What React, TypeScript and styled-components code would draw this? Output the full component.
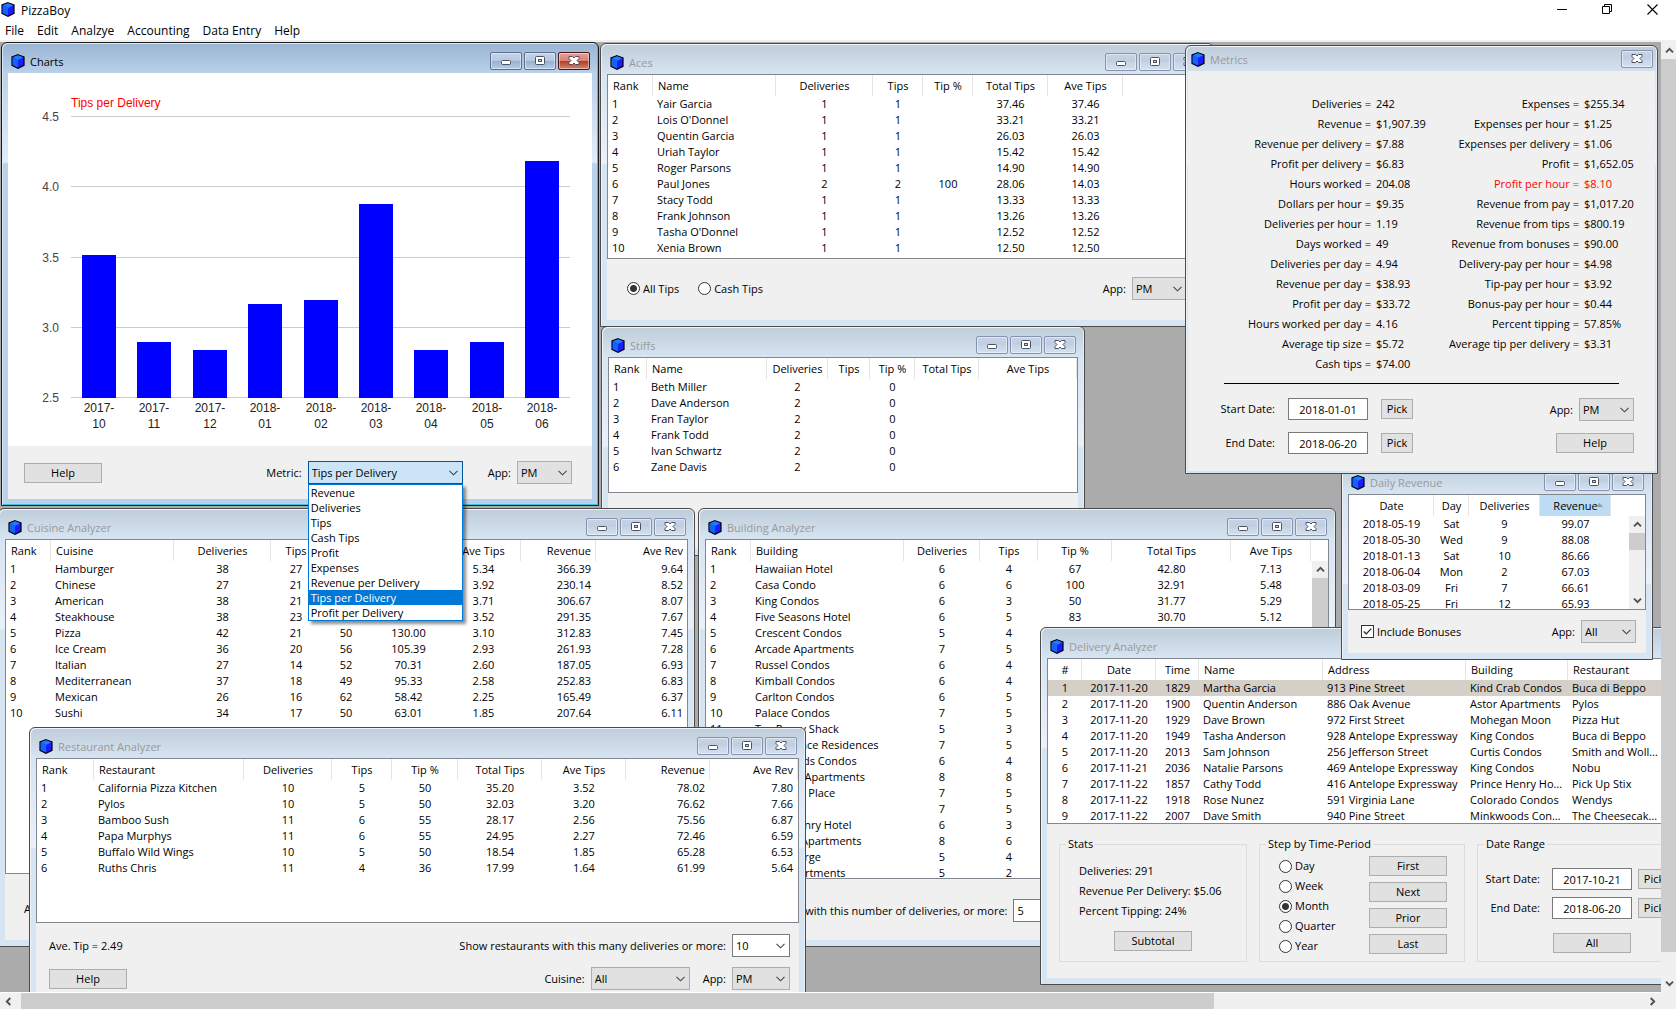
import React from 'react';
import styled, { createGlobalStyle, css } from 'styled-components';

const GlobalStyle = createGlobalStyle`
  * { box-sizing: border-box; }
  body {
    margin: 0;
    background: #fff;
    color: #000;
    font-family: "Open Sans", "Noto Sans", sans-serif;
    font-size: 11px;
    line-height: 16px;
  }
  button, input, select { font: inherit; color: inherit; margin: 0; }
`;

/* ---------- application shell ---------- */

const Shell = styled.div`
  display: flex;
  flex-direction: column;
  height: 100vh;
  overflow: hidden;
`;

const AppTitle = styled.header`
  display: flex;
  align-items: center;
  gap: 6px;
  height: 22px;
  padding: 0 18px 3px 1px;
`;

const AppName = styled.h1`
  flex: 1;
  margin: 0;
  padding-top: 2px;
  font-size: 12px;
  font-weight: 400;
`;

const SystemButtons = styled.div`
  display: flex;
  gap: 34px;
`;

const SystemButton = styled.button`
  display: flex;
  padding: 0;
  border: 0;
  background: none;
`;

const MenuBar = styled.nav`
  display: flex;
  gap: 13px;
  height: 20px;
  padding: 1px 5px;
  border-bottom: 2px solid #f0f0f0;
  font-size: 12px;
`;

const MenuItem = styled.button`
  padding: 0;
  border: 0;
  background: none;
`;

const Workspace = styled.div`
  flex: 1;
  min-height: 0;
  display: grid;
  grid-template-columns: minmax(0, 1fr) 15px;
  grid-template-rows: minmax(0, 1fr) 17px;
  background: #f0f0f0;
`;

const Desktop = styled.main`
  position: relative;
  overflow: hidden;
  background: #ababab;
`;

/* ---------- scroll bars ---------- */

const Track = styled.div<{ $horizontal?: boolean; $below?: number }>`
  display: flex;
  flex-direction: ${p => (p.$horizontal ? 'row' : 'column')};
  gap: ${p => (p.$horizontal ? 4 : 0)}px;
  flex-shrink: 0;
  background: #f0f0f0;
  ${p => (p.$horizontal ? 'border-top: 1px solid #fff;' : 'width: 16px;')}
  margin-top: ${p => p.$below ?? 0}px;
`;

const TrackButton = styled.button`
  display: flex;
  align-items: center;
  justify-content: center;
  flex: 0 0 17px;
  padding: 0;
  border: 0;
  background: none;
`;

const Thumb = styled.div<{ $share: number }>`
  flex: ${p => p.$share} 0 0;
  background: #cdcdcd;
`;

const Rest = styled.div<{ $share: number }>`
  flex: ${p => p.$share} 0 0;
`;

/* ---------- child windows ---------- */

const Frame = styled.section<{
  $x: number; $y: number; $w: number; $h: number; $active?: boolean; $dialog?: boolean;
}>`
  position: absolute;
  left: ${p => p.$x}px;
  top: ${p => p.$y}px;
  width: ${p => p.$w}px;
  height: ${p => p.$h}px;
  display: flex;
  flex-direction: column;
  padding: ${p => (p.$dialog ? '0 2px 2px' : '0 6px 6px')};
  border: 1px solid ${p => (p.$active ? '#1a1a1a' : '#4b4b4b')};
  border-radius: 6px 6px 0 0;
  ${p => p.$active
    ? css`
      background: linear-gradient(#99b4d1, #b9d1ea 30px, #e3ecf8 119px, #b9d1ea 121px);
      box-shadow: inset 1px 1px 0 #dce8f5, inset -1px -1px 0 #35c8e0;
    `
    : css`
      background: linear-gradient(#bfcddb, #d7e4f2 30px, #eaf1f9 119px, #d7e4f2 121px);
      box-shadow: inset 1px 1px 0 #eef4fa, inset -1px 0 0 #e6eef7;
    `}
`;

const TitleBar = styled.header<{ $dialog?: boolean }>`
  display: flex;
  align-items: center;
  flex-shrink: 0;
  gap: 5px;
  height: ${p => (p.$dialog ? 25 : 30)}px;
  padding: ${p => (p.$dialog ? '4px 2px 3px 3px' : '9px 2px 3px 3px')};
`;

const Title = styled.h2<{ $active?: boolean }>`
  flex: 1;
  margin: 0;
  padding-top: 1px;
  font-size: 11px;
  font-weight: 400;
  color: ${p => (p.$active ? '#000' : '#999')};
`;

const FrameButtons = styled.div`
  display: flex;
  gap: 2px;
`;

const FrameButton = styled.button<{ $danger?: boolean; $active?: boolean }>`
  display: flex;
  align-items: center;
  justify-content: center;
  width: 32px;
  height: 18px;
  padding: 0;
  border: 1px solid #8592b0;
  border-radius: 2px;
  box-shadow: inset 0 0 0 1px rgba(255, 255, 255, 0.45);
  background: linear-gradient(#c6d4e4, #bfcee0 50%, #c5d4e6 50%, #d3e0ef);
  ${p => p.$active && css`
    border-color: #5d6f8c;
    background: linear-gradient(#c3d5e9, #b3c9e1 50%, #96b0cf 50%, #b4cde8);
  `}
  ${p => p.$danger && css`
    border-color: #4a1420;
    background: linear-gradient(#e5a194, #d98073 50%, #b43a25 50%, #d6846f);
  `}
`;

const Client = styled.div`
  flex: 1;
  min-height: 0;
  display: flex;
  flex-direction: column;
  background: #f0f0f0;
`;

/* ---------- tables ---------- */

const ListBox = styled.div<{ $h: number }>`
  display: flex;
  flex-shrink: 0;
  height: ${p => p.$h}px;
  overflow: hidden;
  border: 1px solid #828790;
  background: #fff;
`;

const TableArea = styled.div`
  flex: 1;
  min-width: 0;
  overflow: hidden;
`;

const Table = styled.table<{ $w: number }>`
  width: ${p => p.$w}px;
  table-layout: fixed;
  border-collapse: separate;
  border-spacing: 0;
`;

type Align = 'left' | 'center' | 'right';

const HeadCell = styled.th<{ $align: Align; $sorted?: boolean }>`
  position: relative;
  height: 21px;
  padding: 0 4px 0 5px;
  border-right: 1px solid #e5e5e5;
  font-weight: 400;
  text-align: ${p => p.$align};
  white-space: nowrap;
  overflow: hidden;
  background: ${p => (p.$sorted ? '#bcdcf4' : 'transparent')};
`;

const SortMark = styled.svg`
  position: absolute;
  right: 7px;
  top: 8px;
`;

const Cell = styled.td<{ $align: Align }>`
  height: 16px;
  padding: ${p => (p.$align === 'right' ? '0 5px 0 0' : p.$align === 'left' ? '0 3px 0 4px' : '0')};
  text-align: ${p => p.$align};
  white-space: nowrap;
  overflow: hidden;
  text-overflow: ellipsis;
`;

const Row = styled.tr<{ $selected?: boolean }>`
  background: ${p => (p.$selected ? '#d4d0c8' : 'transparent')};
`;

/* ---------- controls ---------- */

const PushButton = styled.button<{ $w?: number }>`
  flex-shrink: 0;
  width: ${p => p.$w ?? 78}px;
  height: 20px;
  padding: 0;
  border: 1px solid #adadad;
  background: #e1e1e1;
  white-space: nowrap;
`;

const SelectWrap = styled.span<{ $w: number }>`
  position: relative;
  display: inline-flex;
  flex-shrink: 0;
  width: ${p => p.$w}px;
  height: 23px;
`;

const NativeSelect = styled.select<{ $tone?: 'edit' | 'open' }>`
  appearance: none;
  width: 100%;
  height: 23px;
  padding: 0 18px 0 3px;
  border: 1px solid ${p => (p.$tone === 'edit' ? '#7a7a7a' : p.$tone === 'open' ? '#005499' : '#adadad')};
  border-radius: 0;
  background: ${p => (p.$tone === 'edit' ? '#fff' : p.$tone === 'open' ? '#cce4f7' : '#e1e1e1')};
`;

const SelectArrow = styled.svg`
  position: absolute;
  right: 4px;
  top: 9px;
  pointer-events: none;
`;

const DropList = styled.ul`
  position: absolute;
  z-index: 1;
  left: 0;
  top: 23px;
  width: 100%;
  margin: 0;
  padding: 0;
  list-style: none;
  border: 1px solid #0078d7;
  background: #fff;
  box-shadow: 3px 3px 3px rgba(0, 0, 0, 0.45);
`;

const DropItem = styled.li<{ $selected?: boolean }>`
  height: 15px;
  padding-left: 2px;
  line-height: 15px;
  color: ${p => (p.$selected ? '#fff' : '#000')};
  background: ${p => (p.$selected ? '#0078d7' : 'transparent')};
`;

const Field = styled.div`
  display: flex;
  align-items: center;
  gap: 6px;
  white-space: nowrap;
`;

const DateInput = styled.input`
  width: 80px;
  height: 22px;
  padding: 0;
  border: 1px solid #7a7a7a;
  background: #fff;
  text-align: center;
`;

const Choice = styled.label`
  display: flex;
  align-items: center;
  gap: 3px;
  height: 20px;
`;

const Radio = styled.input`
  appearance: none;
  width: 13px;
  height: 13px;
  border: 1px solid #333;
  border-radius: 50%;
  background: #fff;
  &:checked { background: radial-gradient(circle, #333 0 3px, #fff 4px); }
`;

const CheckWrap = styled.span`
  position: relative;
  display: flex;
`;

const CheckBox = styled.input`
  appearance: none;
  width: 13px;
  height: 13px;
  border: 1px solid #333;
  background: #fff;
`;

const CheckMark = styled.svg`
  position: absolute;
  left: 2px;
  top: 2px;
  pointer-events: none;
`;

const Bar = styled.div<{ $top: number; $left: number; $right: number }>`
  display: flex;
  align-items: center;
  justify-content: space-between;
  padding: ${p => p.$top}px ${p => p.$right}px 0 ${p => p.$left}px;
`;

const Group = styled.div<{ $gap: number }>`
  display: flex;
  align-items: center;
  gap: ${p => p.$gap}px;
`;

/* ---------- metrics window ---------- */

const MetricColumns = styled.div`
  display: flex;
  padding-top: 23px;
`;

const MetricList = styled.dl<{ $share: number; $label: number }>`
  flex: ${p => p.$share} 1 0;
  margin: 0;
  display: grid;
  grid-template-columns: ${p => p.$label}px 1fr;
  column-gap: 5px;
  grid-auto-rows: 20px;
  line-height: 20px;
  white-space: nowrap;
`;

const MetricName = styled.dt<{ $hot?: boolean }>`
  text-align: right;
  color: ${p => (p.$hot ? '#f00' : 'inherit')};
`;

const MetricValue = styled.dd<{ $hot?: boolean }>`
  margin: 0;
  color: ${p => (p.$hot ? '#f00' : 'inherit')};
`;

const Rule = styled.hr`
  width: auto;
  margin: 9px 36px 14px;
  border: 0;
  border-top: 1px solid #000;
`;

const MetricForm = styled.div`
  display: flex;
  justify-content: space-between;
  padding: 0 21px 0 32px;
`;

const FormStack = styled.div<{ $gap: number }>`
  display: flex;
  flex-direction: column;
  align-items: flex-end;
  gap: ${p => p.$gap}px;
`;

const DateRow = styled.div<{ $label: number; $gap: number }>`
  display: grid;
  grid-template-columns: ${p => p.$label}px 80px 32px;
  align-items: center;
  column-gap: ${p => p.$gap}px;
  white-space: nowrap;
`;

const DateLabel = styled.label<{ $pad: number }>`
  padding-right: ${p => p.$pad}px;
  text-align: right;
`;

/* ---------- delivery window ---------- */

const Groups = styled.div`
  display: flex;
  gap: 12px;
  padding: 12px 12px 0;
`;

const GroupBox = styled.fieldset<{ $w: number }>`
  flex: 0 0 ${p => p.$w}px;
  min-width: 0;
  height: 126px;
  margin: 0;
  padding: 0;
  border: 1px solid #dcdcdc;
`;

const Legend = styled.legend`
  margin-left: 6px;
  padding: 0 2px;
`;

const StatsBody = styled.div`
  display: flex;
  flex-direction: column;
  padding: 9px 19px 0;
`;

const Stat = styled.p`
  margin: 0;
  line-height: 20px;
`;

const StatAction = styled.div`
  display: flex;
  justify-content: center;
  padding-top: 10px;
`;

const StepBody = styled.div`
  display: flex;
  justify-content: space-between;
  padding: 4px 17px 0 19px;
`;

const StepButtons = styled.div`
  display: flex;
  flex-direction: column;
  gap: 6px;
`;

const RangeBody = styled.div`
  display: flex;
  flex-direction: column;
  gap: 7px;
  padding-top: 16px;
`;

const RangeAction = styled.div`
  padding: 7px 0 0 75px;
`;

/* ---------- icons ---------- */

const Cube = () => (
  <svg width="14" height="15" viewBox="0 0 14 15" aria-hidden="true">
    <path d="M7 .7 13 3v8.300L7 14.300 1 11.300V3z" fill="#1c1cff" stroke="#000" strokeWidth="1.200" />
    <path d="M1.600 3.500 7 6v7.600L1.600 11z" fill="#1464f4" />
    <path d="M7 1.300 12.300 3.300 7 6 1.700 3.300z" fill="#1a7cff" />
  </svg>
);

const MinIcon = () => (
  <svg width="12" height="12" viewBox="0 0 12 12" aria-hidden="true">
    <rect x="1.500" y="5.500" width="9" height="4" rx="1" fill="#fff" stroke="#4c5262" />
  </svg>
);

const MaxIcon = () => (
  <svg width="12" height="12" viewBox="0 0 12 12" aria-hidden="true">
    <rect x="1.500" y="1.500" width="9" height="8" rx="1" fill="#fff" stroke="#4c5262" />
    <rect x="4.500" y="4.500" width="3" height="2" fill="#c6d4e4" stroke="#4c5262" />
  </svg>
);

const CloseIcon = () => (
  <svg width="12" height="12" viewBox="0 0 12 12" aria-hidden="true">
    <path d="M1 1.500h3.500l1.500 1.500 1.500-1.500h3.500v2l-2 2 2 2v2h-3.500l-1.500-1.500-1.500 1.500h-3.500v-2l2-2-2-2z" fill="#fff" stroke="#4c5262" />
  </svg>
);

const turns = { up: 0, right: 90, down: 180, left: 270 };

const Arrow = ({ dir }: { dir: keyof typeof turns }) => (
  <svg width="9" height="9" viewBox="0 0 9 9" aria-hidden="true">
    <path d="M1 6.300 4.500 2.800 8 6.300" fill="none" stroke="#505050" strokeWidth="1.900"
      transform={`rotate(${turns[dir]} 4.500 4.500)`} />
  </svg>
);

/* ---------- shared parts ---------- */

type Column = [label: string, width: number, align: Align];

function ScrollBar({ parts, horizontal, below }: {
  parts: [number, number]; horizontal?: boolean; below?: number;
}) {
  return (
    <Track $horizontal={horizontal} $below={below}>
      <TrackButton aria-label={horizontal ? 'Scroll left' : 'Scroll up'}><Arrow dir={horizontal ? 'left' : 'up'} /></TrackButton>
      <Thumb $share={parts[0]} />
      <Rest $share={parts[1]} />
      <TrackButton aria-label={horizontal ? 'Scroll right' : 'Scroll down'}><Arrow dir={horizontal ? 'right' : 'down'} /></TrackButton>
    </Track>
  );
}

function ListView({ columns, rows, height, selected, sorted, scroll }: {
  columns: Column[]; rows: string[][]; height: number;
  selected?: number; sorted?: number; scroll?: [number, number];
}) {
  const width = columns.reduce((sum, c) => sum + c[1], 0);
  return (
    <ListBox $h={height}>
      <TableArea>
        <Table $w={width}>
          <colgroup>{columns.map((c, i) => <col key={i} style={{ width: c[1] }} />)}</colgroup>
          <thead>
            <tr>
              {columns.map((c, i) => (
                <HeadCell key={i} $align={c[2]} $sorted={i === sorted}>
                  {c[0]}
                  {i === sorted && (
                    <SortMark width="7" height="4" viewBox="0 0 7 4"><path d="M0 4 3.500 0 7 4z" fill="#9a9a9a" /></SortMark>
                  )}
                </HeadCell>
              ))}
            </tr>
          </thead>
          <tbody>
            {rows.map((row, r) => (
              <Row key={r} $selected={r === selected}>
                {row.map((cell, i) => <Cell key={i} $align={columns[i][2]}>{cell}</Cell>)}
              </Row>
            ))}
          </tbody>
        </Table>
      </TableArea>
      {scroll && <ScrollBar parts={scroll} below={21} />}
    </ListBox>
  );
}

function Dropdown({ id, label, value, width = 55, tone, children }: {
  id: string; label: string; value: string; width?: number; tone?: 'edit' | 'open'; children?: React.ReactNode;
}) {
  return (
    <Field>
      <label htmlFor={id}>{label}</label>
      <SelectWrap $w={width}>
        <NativeSelect id={id} $tone={tone} defaultValue={value}><option>{value}</option></NativeSelect>
        <SelectArrow width="11" height="6" viewBox="0 0 11 6" aria-hidden="true">
          <path d="M1.500.8 5.500 4.800 9.500.8" fill="none" stroke="#444" strokeWidth="1.100" />
        </SelectArrow>
        {children}
      </SelectWrap>
    </Field>
  );
}

function DateField({ id, label, value, labelWidth, labelPad = 0, gap }: {
  id: string; label: string; value: string; labelWidth: number; labelPad?: number; gap: number;
}) {
  return (
    <DateRow $label={labelWidth} $gap={gap}>
      <DateLabel htmlFor={id} $pad={labelPad}>{label}</DateLabel>
      <DateInput id={id} defaultValue={value} />
      <PushButton $w={32}>Pick</PushButton>
    </DateRow>
  );
}

function Window({ title, x, y, w, h, active, dialog, children }: {
  title: string; x: number; y: number; w: number; h: number;
  active?: boolean; dialog?: boolean; children: React.ReactNode;
}) {
  return (
    <Frame $x={x} $y={y} $w={w} $h={h} $active={active} $dialog={dialog}>
      <TitleBar $dialog={dialog}>
        <Cube />
        <Title $active={active}>{title}</Title>
        <FrameButtons>
          {!dialog && <FrameButton $active={active} aria-label="Minimize"><MinIcon /></FrameButton>}
          {!dialog && <FrameButton $active={active} aria-label="Maximize"><MaxIcon /></FrameButton>}
          <FrameButton $danger={active} aria-label="Close"><CloseIcon /></FrameButton>
        </FrameButtons>
      </TitleBar>
      <Client>{children}</Client>
    </Frame>
  );
}

/* ---------- data ---------- */

const acesColumns: Column[] = [
  ['Rank', 45, 'left'], ['Name', 123, 'left'], ['Deliveries', 97, 'center'], ['Tips', 50, 'center'],
  ['Tip %', 50, 'center'], ['Total Tips', 75, 'center'], ['Ave Tips', 75, 'center'],
];
const aces = [
  ['1', 'Yair Garcia', '1', '1', '', '37.46', '37.46'],
  ['2', "Lois O'Donnel", '1', '1', '', '33.21', '33.21'],
  ['3', 'Quentin Garcia', '1', '1', '', '26.03', '26.03'],
  ['4', 'Uriah Taylor', '1', '1', '', '15.42', '15.42'],
  ['5', 'Roger Parsons', '1', '1', '', '14.90', '14.90'],
  ['6', 'Paul Jones', '2', '2', '100', '28.06', '14.03'],
  ['7', 'Stacy Todd', '1', '1', '', '13.33', '13.33'],
  ['8', 'Frank Johnson', '1', '1', '', '13.26', '13.26'],
  ['9', "Tasha O'Donnel", '1', '1', '', '12.52', '12.52'],
  ['10', 'Xenia Brown', '1', '1', '', '12.50', '12.50'],
];

const stiffsColumns: Column[] = [
  ['Rank', 38, 'left'], ['Name', 120, 'left'], ['Deliveries', 61, 'center'], ['Tips', 42, 'center'],
  ['Tip %', 45, 'center'], ['Total Tips', 64, 'center'], ['Ave Tips', 98, 'center'],
];
const stiffs = ['Beth Miller', 'Dave Anderson', 'Fran Taylor', 'Frank Todd', 'Ivan Schwartz', 'Zane Davis']
  .map((name, i) => [String(i + 1), name, '2', '', '0', '', '']);

const cuisineColumns: Column[] = [
  ['Rank', 45, 'left'], ['Cuisine', 123, 'left'], ['Deliveries', 97, 'center'], ['Tips', 50, 'center'],
  ['Tip %', 50, 'center'], ['Total Tips', 75, 'center'], ['Ave Tips', 75, 'center'], ['Revenue', 75, 'right'], ['Ave Rev', 92, 'right'],
];
const cuisines = [
  ['1', 'Hamburger', '38', '27', '71', '202.92', '5.34', '366.39', '9.64'],
  ['2', 'Chinese', '27', '21', '78', '105.84', '3.92', '230.14', '8.52'],
  ['3', 'American', '38', '21', '55', '140.98', '3.71', '306.67', '8.07'],
  ['4', 'Steakhouse', '38', '23', '61', '133.76', '3.52', '291.35', '7.67'],
  ['5', 'Pizza', '42', '21', '50', '130.00', '3.10', '312.83', '7.45'],
  ['6', 'Ice Cream', '36', '20', '56', '105.39', '2.93', '261.93', '7.28'],
  ['7', 'Italian', '27', '14', '52', '70.31', '2.60', '187.05', '6.93'],
  ['8', 'Mediterranean', '37', '18', '49', '95.33', '2.58', '252.83', '6.83'],
  ['9', 'Mexican', '26', '16', '62', '58.42', '2.25', '165.49', '6.37'],
  ['10', 'Sushi', '34', '17', '50', '63.01', '1.85', '207.64', '6.11'],
];

const buildingColumns: Column[] = [
  ['Rank', 45, 'left'], ['Building', 153, 'left'], ['Deliveries', 76, 'center'], ['Tips', 58, 'center'],
  ['Tip %', 74, 'center'], ['Total Tips', 119, 'center'], ['Ave Tips', 80, 'center'],
];
const buildings = [
  ['1', 'Hawaiian Hotel', '6', '4', '67', '42.80', '7.13'],
  ['2', 'Casa Condo', '6', '6', '100', '32.91', '5.48'],
  ['3', 'King Condos', '6', '3', '50', '31.77', '5.29'],
  ['4', 'Five Seasons Hotel', '6', '5', '83', '30.70', '5.12'],
  ['5', 'Crescent Condos', '5', '4', '', '', ''],
  ['6', 'Arcade Apartments', '7', '5', '', '', ''],
  ['7', 'Russel Condos', '6', '4', '', '', ''],
  ['8', 'Kimball Condos', '6', '4', '', '', ''],
  ['9', 'Carlton Condos', '6', '5', '', '', ''],
  ['10', 'Palace Condos', '7', '5', '', '', ''],
  ['11', 'Tex Posey Shack', '5', '3', '', '', ''],
  ['12', 'Renaissance Residences', '7', '5', '', '', ''],
  ['13', 'Cloverfields Condos', '6', '4', '', '', ''],
  ['14', 'Riverside Apartments', '8', '8', '', '', ''],
  ['15', 'Lexington Place', '7', '5', '', '', ''],
  ['16', 'Plaza', '7', '5', '', '', ''],
  ['17', 'Prince Henry Hotel', '6', '3', '', '', ''],
  ['18', 'Foothills Apartments', '8', '6', '', '', ''],
  ['19', 'Saint George', '5', '4', '', '', ''],
  ['20', 'Astor Apartments', '5', '2', '', '', ''],
];

const restaurantColumns: Column[] = [
  ['Rank', 57, 'left'], ['Restaurant', 150, 'left'], ['Deliveries', 88, 'center'], ['Tips', 60, 'center'],
  ['Tip %', 66, 'center'], ['Total Tips', 84, 'center'], ['Ave Tips', 84, 'center'], ['Revenue', 84, 'right'], ['Ave Rev', 88, 'right'],
];
const restaurants = [
  ['1', 'California Pizza Kitchen', '10', '5', '50', '35.20', '3.52', '78.02', '7.80'],
  ['2', 'Pylos', '10', '5', '50', '32.03', '3.20', '76.62', '7.66'],
  ['3', 'Bamboo Sush', '11', '6', '55', '28.17', '2.56', '75.56', '6.87'],
  ['4', 'Papa Murphys', '11', '6', '55', '24.95', '2.27', '72.46', '6.59'],
  ['5', 'Buffalo Wild Wings', '10', '5', '50', '18.54', '1.85', '65.28', '6.53'],
  ['6', 'Ruths Chris', '11', '4', '36', '17.99', '1.64', '61.99', '5.64'],
];

const deliveryColumns: Column[] = [
  ['#', 34, 'center'], ['Date', 74, 'center'], ['Time', 43, 'center'], ['Name', 124, 'left'],
  ['Address', 143, 'left'], ['Building', 102, 'left'], ['Restaurant', 96, 'left'],
];
const deliveries = [
  ['1', '2017-11-20', '1829', 'Martha Garcia', '913 Pine Street', 'Kind Crab Condos', 'Buca di Beppo'],
  ['2', '2017-11-20', '1900', 'Quentin Anderson', '886 Oak Avenue', 'Astor Apartments', 'Pylos'],
  ['3', '2017-11-20', '1929', 'Dave Brown', '972 First Street', 'Mohegan Moon', 'Pizza Hut'],
  ['4', '2017-11-20', '1949', 'Tasha Anderson', '928 Antelope Expressway', 'King Condos', 'Buca di Beppo'],
  ['5', '2017-11-20', '2013', 'Sam Johnson', '256 Jefferson Street', 'Curtis Condos', 'Smith and Wollensky'],
  ['6', '2017-11-21', '2036', 'Natalie Parsons', '469 Antelope Expressway', 'King Condos', 'Nobu'],
  ['7', '2017-11-22', '1857', 'Cathy Todd', '416 Antelope Expressway', 'Prince Henry Hotel', 'Pick Up Stix'],
  ['8', '2017-11-22', '1918', 'Rose Nunez', '591 Virginia Lane', 'Colorado Condos', 'Wendys'],
  ['9', '2017-11-22', '2007', 'Dave Smith', '940 Pine Street', 'Minkwoods Condos', 'The Cheesecake Factory'],
];

const dailyColumns: Column[] = [
  ['Date', 85, 'center'], ['Day', 35, 'center'], ['Deliveries', 71, 'center'], ['Revenue', 71, 'center'],
];
const daily = [
  ['2018-05-19', 'Sat', '9', '99.07'],
  ['2018-05-30', 'Wed', '9', '88.08'],
  ['2018-01-13', 'Sat', '10', '86.66'],
  ['2018-06-04', 'Mon', '2', '67.03'],
  ['2018-03-09', 'Fri', '7', '66.61'],
  ['2018-05-25', 'Fri', '12', '65.93'],
];

const metricsLeft = [
  ['Deliveries', '242'], ['Revenue', '$1,907.39'], ['Revenue per delivery', '$7.88'], ['Profit per delivery', '$6.83'],
  ['Hours worked', '204.08'], ['Dollars per hour', '$9.35'], ['Deliveries per hour', '1.19'], ['Days worked', '49'],
  ['Deliveries per day', '4.94'], ['Revenue per day', '$38.93'], ['Profit per day', '$33.72'],
  ['Hours worked per day', '4.16'], ['Average tip size', '$5.72'], ['Cash tips', '$74.00'],
];
const metricsRight = [
  ['Expenses', '$255.34'], ['Expenses per hour', '$1.25'], ['Expenses per delivery', '$1.06'], ['Profit', '$1,652.05'],
  ['Profit per hour', '$8.10'], ['Revenue from pay', '$1,017.20'], ['Revenue from tips', '$800.19'],
  ['Revenue from bonuses', '$90.00'], ['Delivery-pay per hour', '$4.98'], ['Tip-pay per hour', '$3.92'],
  ['Bonus-pay per hour', '$0.44'], ['Percent tipping', '57.85%'], ['Average tip per delivery', '$3.31'],
];

const chartData: [string, string, number][] = [
  ['2017-', '10', 3.52], ['2017-', '11', 2.9], ['2017-', '12', 2.84], ['2018-', '01', 3.17], ['2018-', '02', 3.2],
  ['2018-', '03', 3.88], ['2018-', '04', 2.84], ['2018-', '05', 2.9], ['2018-', '06', 4.19],
];

const metricOptions = [
  'Revenue', 'Deliveries', 'Tips', 'Cash Tips', 'Profit', 'Expenses',
  'Revenue per Delivery', 'Tips per Delivery', 'Profit per Delivery',
];

/* ---------- chart ---------- */

const ChartSvg = styled.svg`
  flex-shrink: 0;
  background: #fff;
  font-family: "Liberation Sans", sans-serif;
  font-size: 12px;
`;

function Chart() {
  const base = 325;
  const unit = 140.5;
  return (
    <ChartSvg width="584" height="373" viewBox="0 0 584 373" role="img" aria-label="Tips per Delivery">
      <text x="63" y="34" fill="#f00">Tips per Delivery</text>
      {[4.5, 4, 3.5, 3, 2.5].map(v => {
        const y = Math.round(base - (v - 2.5) * unit);
        return (
          <g key={v}>
            <rect x="63" y={y - 1} width="499" height="1" fill="#ccc" />
            <text x="51" y={y + 4} textAnchor="end" fill="#444">{v.toFixed(1)}</text>
          </g>
        );
      })}
      {chartData.map(([year, month, v], i) => {
        const x = Math.round(74 + i * 55.4);
        const y = Math.round(base - (v - 2.5) * unit);
        return (
          <g key={i} textAnchor="middle" fill="#222">
            <rect x={x} y={y} width="34" height={base - y} fill="#00f" />
            <text x={x + 17} y="339">{year}</text>
            <text x={x + 17} y="355">{month}</text>
          </g>
        );
      })}
    </ChartSvg>
  );
}

/* ---------- page ---------- */

function MetricPairs({ items, share, label, hot }: { items: string[][]; share: number; label: number; hot?: string }) {
  return (
    <MetricList $share={share} $label={label}>
      {items.map(([name, value]) => (
        <React.Fragment key={name}>
          <MetricName $hot={name === hot}>{name} =</MetricName>
          <MetricValue $hot={name === hot}>{value}</MetricValue>
        </React.Fragment>
      ))}
    </MetricList>
  );
}

export default function App() {
  return (
    <Shell>
      <GlobalStyle />
      <AppTitle>
        <Cube />
        <AppName>PizzaBoy</AppName>
        <SystemButtons>
          <SystemButton aria-label="Minimize">
            <svg width="11" height="11" viewBox="0 0 11 11"><path d="M0 5.500h10" stroke="#000" /></svg>
          </SystemButton>
          <SystemButton aria-label="Restore">
            <svg width="11" height="11" viewBox="0 0 11 11">
              <path d="M.5 2.500h7v7h-7zM2.500 2.500v-2h7v7h-2" fill="none" stroke="#000" />
            </svg>
          </SystemButton>
          <SystemButton aria-label="Close">
            <svg width="11" height="11" viewBox="0 0 11 11"><path d="M.5.5l10 10M10.500.5l-10 10" stroke="#000" strokeWidth="1.100" /></svg>
          </SystemButton>
        </SystemButtons>
      </AppTitle>
      <MenuBar>
        {['File', 'Edit', 'Analzye', 'Accounting', 'Data Entry', 'Help'].map(m => <MenuItem key={m}>{m}</MenuItem>)}
      </MenuBar>

      <Workspace>
        <Desktop>
          <Window title="Aces" x={600} y={1} w={614} h={284}>
            <ListView columns={acesColumns} rows={aces} height={185} />
            <Bar $top={18} $left={20} $right={20}>
              <Group $gap={19}>
                <Choice><Radio type="radio" name="tips" defaultChecked />All Tips</Choice>
                <Choice><Radio type="radio" name="tips" />Cash Tips</Choice>
              </Group>
              <Dropdown id="aces-app" label="App:" value="PM" />
            </Bar>
          </Window>

          <Window title="Stiffs" x={601} y={284} w={484} h={230}>
            <ListView columns={stiffsColumns} rows={stiffs} height={136} />
          </Window>

          <Window title="Cuisine Analyzer" x={-2} y={466} w={697} h={439}>
            <ListView columns={cuisineColumns} rows={cuisines} height={335} />
            <Bar $top={27} $left={19} $right={20}>
              <span>Ave. Tip = 3.20</span>
            </Bar>
          </Window>

          <Window title="Building Analyzer" x={698} y={466} w={638} h={439}>
            <ListView columns={buildingColumns} rows={buildings} height={340} scroll={[200, 86]} />
            <Bar $top={20} $left={20} $right={261}>
              <span />
              <Dropdown id="building-min" label="Show buildings with this number of deliveries, or more:" value="5" width={58} tone="edit" />
            </Bar>
          </Window>

          <Window title="Restaurant Analyzer" x={29} y={685} w={777} h={330}>
            <ListView columns={restaurantColumns} rows={restaurants} height={165} />
            <Bar $top={11} $left={13} $right={9}>
              <span>Ave. Tip = 2.49</span>
              <Dropdown id="restaurant-min" label="Show restaurants with this many deliveries or more:" value="10" width={58} tone="edit" />
            </Bar>
            <Bar $top={10} $left={13} $right={9}>
              <PushButton>Help</PushButton>
              <Group $gap={13}>
                <Dropdown id="restaurant-cuisine" label="Cuisine:" value="All" width={99} />
                <Dropdown id="restaurant-app" label="App:" value="PM" width={58} />
              </Group>
            </Bar>
          </Window>

          <Window title="Delivery Analyzer" x={1040} y={585} w={800} h={358}>
            <ListView columns={deliveryColumns} rows={deliveries} height={166} selected={0} />
            <Groups>
              <GroupBox $w={188}>
                <Legend>Stats</Legend>
                <StatsBody>
                  <Stat>Deliveries: 291</Stat>
                  <Stat>Revenue Per Delivery: $5.06</Stat>
                  <Stat>Percent Tipping: 24%</Stat>
                  <StatAction><PushButton>Subtotal</PushButton></StatAction>
                </StatsBody>
              </GroupBox>
              <GroupBox $w={206}>
                <Legend>Step by Time-Period</Legend>
                <StepBody>
                  <div>
                    {['Day', 'Week', 'Month', 'Quarter', 'Year'].map(step => (
                      <Choice key={step}><Radio type="radio" name="step" defaultChecked={step === 'Month'} />{step}</Choice>
                    ))}
                  </div>
                  <StepButtons>
                    {['First', 'Next', 'Prior', 'Last'].map(b => <PushButton key={b}>{b}</PushButton>)}
                  </StepButtons>
                </StepBody>
              </GroupBox>
              <GroupBox $w={210}>
                <Legend>Date Range</Legend>
                <RangeBody>
                  <DateField id="range-start" label="Start Date:" value="2017-10-21" labelWidth={68} labelPad={6} gap={6} />
                  <DateField id="range-end" label="End Date:" value="2018-06-20" labelWidth={68} labelPad={6} gap={6} />
                  <RangeAction><PushButton>All</PushButton></RangeAction>
                </RangeBody>
              </GroupBox>
            </Groups>
          </Window>

          <Window title="Daily Revenue" x={1341} y={421} w={312} h={197}>
            <ListView columns={dailyColumns} rows={daily} height={116} sorted={3} scroll={[17, 42]} />
            <Bar $top={10} $left={13} $right={10}>
              <Choice>
                <CheckWrap>
                  <CheckBox type="checkbox" defaultChecked />
                  <CheckMark width="9" height="9" viewBox="0 0 9 9"><path d="M.8 4.500 3.300 7 8.200 1.600" fill="none" stroke="#222" strokeWidth="1.200" /></CheckMark>
                </CheckWrap>
                Include Bonuses
              </Choice>
              <Dropdown id="daily-app" label="App:" value="All" />
            </Bar>
          </Window>

          <Window title="Metrics" x={1185} y={3} w={473} h={429} dialog>
            <MetricColumns>
              <MetricPairs items={metricsLeft} share={252} label={183} />
              <MetricPairs items={metricsRight} share={215} label={139} hot="Profit per hour" />
            </MetricColumns>
            <Rule />
            <MetricForm>
              <FormStack $gap={12}>
                <DateField id="metrics-start" label="Start Date:" value="2018-01-01" labelWidth={55} gap={13} />
                <DateField id="metrics-end" label="End Date:" value="2018-06-20" labelWidth={55} gap={13} />
              </FormStack>
              <FormStack $gap={12}>
                <Dropdown id="metrics-app" label="App:" value="PM" />
                <PushButton>Help</PushButton>
              </FormStack>
            </MetricForm>
          </Window>

          <Window title="Charts" x={1} y={0} w={598} h={464} active>
            <Chart />
            <Bar $top={15} $left={16} $right={20}>
              <PushButton>Help</PushButton>
              <Group $gap={25}>
                <Dropdown id="chart-metric" label="Metric:" value="Tips per Delivery" width={155} tone="open">
                  <DropList role="listbox" aria-label="Metric">
                    {metricOptions.map(m => (
                      <DropItem key={m} role="option" aria-selected={m === 'Tips per Delivery'} $selected={m === 'Tips per Delivery'}>{m}</DropItem>
                    ))}
                  </DropList>
                </Dropdown>
                <Dropdown id="chart-app" label="App:" value="PM" />
              </Group>
            </Bar>
          </Window>
        </Desktop>
        <ScrollBar parts={[893, 23]} />
        <ScrollBar parts={[1193, 422]} horizontal />
      </Workspace>
    </Shell>
  );
}
